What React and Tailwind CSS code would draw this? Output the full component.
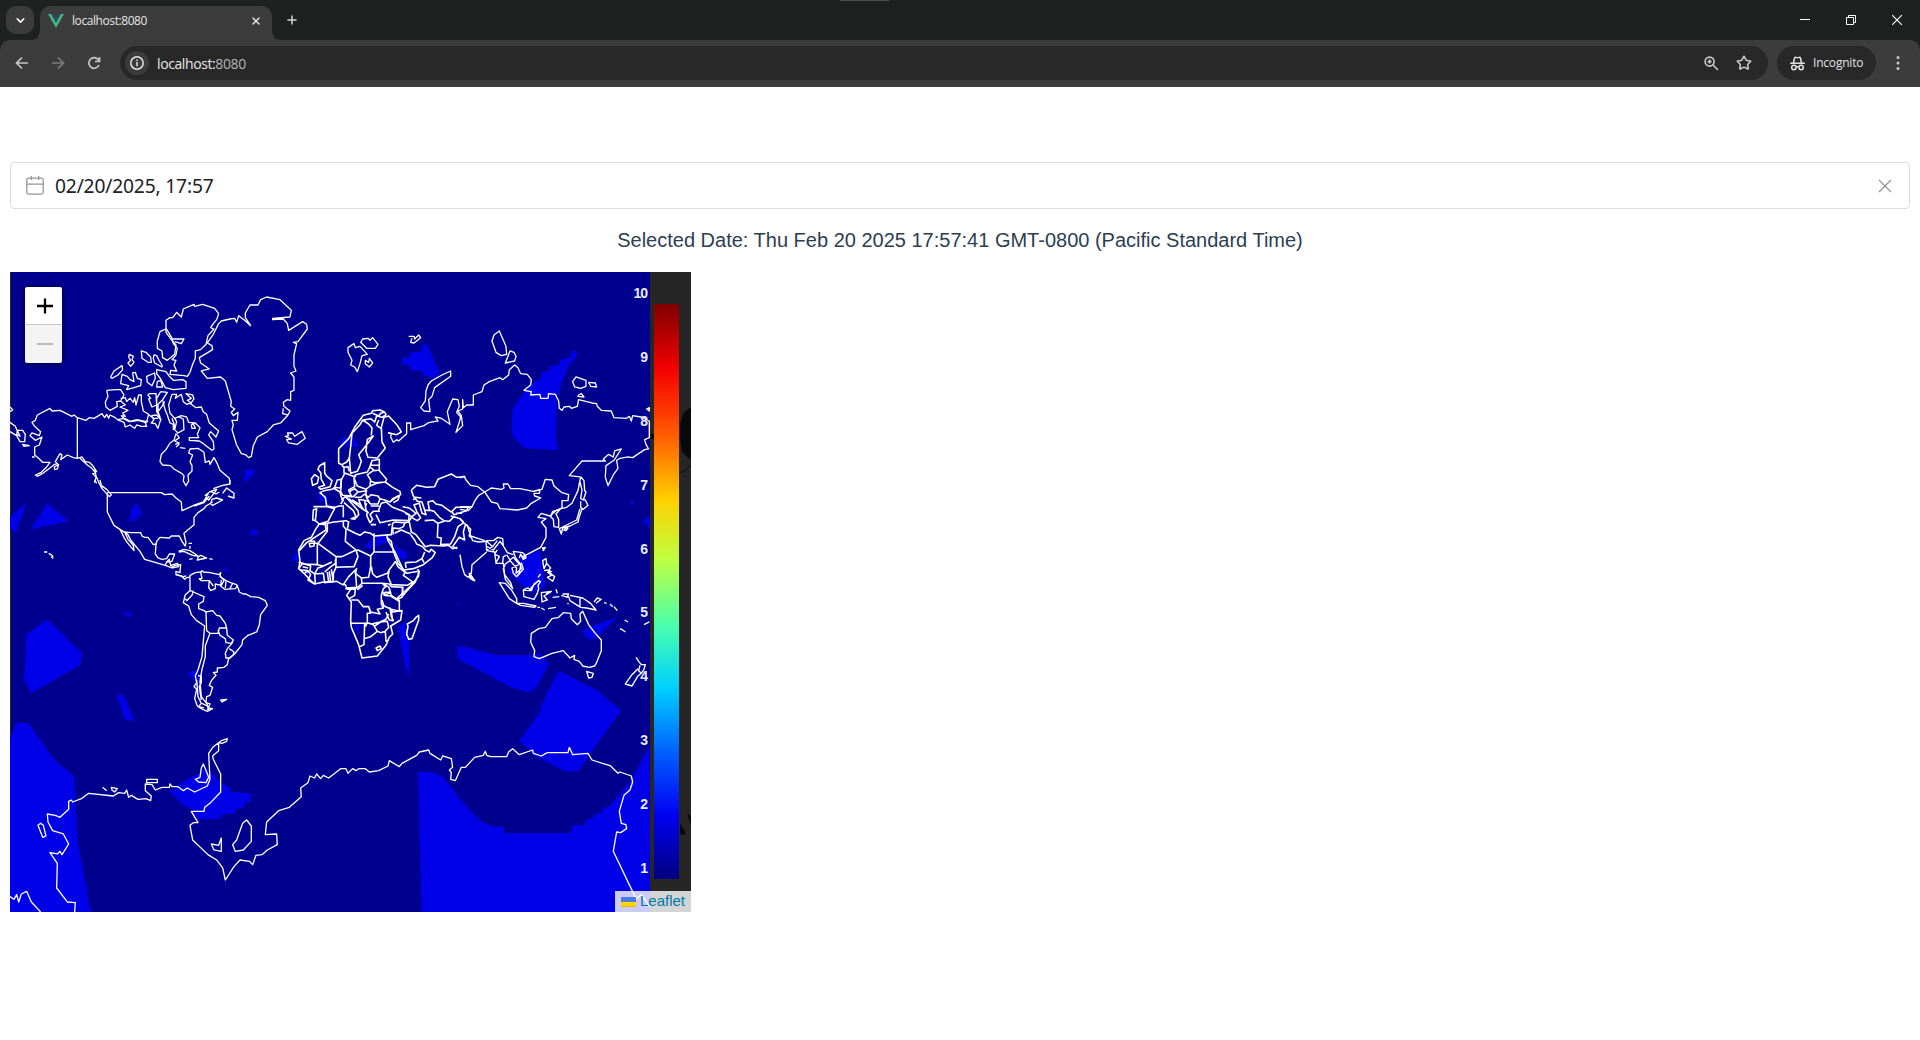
import React from "react";
import { Star, X, Plus, ChevronDown } from "lucide-react";

// Coastlines and borders, grouped by region; coordinates are thirds of a map pixel.
const NORTH_AMERICA = [
  "M30 426L38 434L30 440M30 472L46 484L52 498L50 508L60 514L52 496L68 496L76 508L74 530L60 530L50 512L30 500M68 538L88 542L72 544ZM96 576H104",
  "M232 458L222 450L216 454L180 436L156 438L150 430L112 450L106 466L96 472L104 484L122 500L118 512L96 504L90 512L106 526L126 516L118 540L104 546V570L116 580L128 592H150L140 606L124 622L106 630L112 634L130 624L146 612L164 598L172 596L166 590L180 566L186 570L182 584L202 570L220 578L232 580Z",
  "M163 606L176 598L172 612L164 614Z",
  "M232 458L258 466L268 458L282 460L306 446L314 458L320 448L326 460L330 450L346 458L352 464L372 472L376 486L390 480L404 490L410 480L424 484L440 484L436 474L444 468M352 464L374 460L392 470L416 466L440 474M454 452L470 450L482 464L474 490L466 476L454 474L462 464L454 452M476 452L484 466",
  "M232 580L246 576L256 590L268 592L280 604L290 620L284 612L288 632L298 656L306 668M240 580L262 600L276 610L286 624L278 626L288 636L284 654",
  "M320 376L346 374L362 374L372 390L362 408L350 410L352 424L330 436L318 426L316 412L324 394L320 376M362 400L376 398L380 410L390 400L400 412L404 398L408 420L416 390L424 390L424 410L430 438L446 448L440 470L410 464L388 470L372 462L364 452L376 454L368 444L384 436L360 426L376 420L362 408",
  "M448 386L468 386L470 420L456 426L446 402L452 400L444 390ZM482 380L502 382L488 404L474 418L474 440L480 456L470 440V400L482 380M474 440L486 424L494 410",
  "M332 336L342 318L366 302L368 314L354 330L336 340ZM366 328L382 334L390 344L402 350L398 324L406 322L412 340L424 344L422 362L402 368L380 374L386 362L362 356ZM388 268L400 274L396 284L402 292L392 304L384 294L392 286L386 276Z",
  "M424 258L438 262L452 276L454 292L444 292L426 280ZM462 270L470 272L478 288L486 300V306L464 294L460 280ZM440 334L464 324L466 340L456 362L442 352ZM472 350L482 346L488 366L470 366ZM470 314L498 320L508 334L520 346L548 344L558 350V370L520 374L496 368L482 342L470 326Z",
  "M488 196L498 192V202L514 224L528 240L524 268L502 286L488 278L486 258L472 250V228L480 200Z",
  "M498 166L510 158H518L530 142L544 156L550 132L568 124L582 118L584 124L608 118L644 130L656 146L650 164L640 176L632 188L642 192L624 212L618 238L602 254L586 258V280L578 298L570 322L562 334L552 332L510 328L512 316L530 318L522 300L528 286L516 284L528 270L532 250L520 236L516 220L508 206L498 190ZM516 222L552 222L544 236L524 230",
  "M656 176L664 168L690 162L704 160L710 172L716 152L734 166L752 182L736 158V144L750 120H774L782 104L800 96L840 104L874 136L870 156L818 160V164L850 162L862 176L866 196L908 170L920 178L922 192L894 230L880 232L890 236L882 270V304L888 318L872 324L882 336V376L872 380V406L862 404L850 412L852 424L870 438L864 450L848 446L850 430M864 450L842 474L820 480L802 500L772 516L760 542L754 574L746 578L738 570L724 566L710 540L696 494L700 480L696 466L712 466L714 442L700 452L694 442L704 432L692 424L694 410L676 348L662 336L622 340L604 318L628 312L602 294L598 278L638 254L636 242L622 234L640 208L656 176",
  "M862 504H878L884 514L906 500L916 520L892 538L866 534L860 524L874 522L856 514L866 512Z",
  "M516 388H530L526 400L544 388L550 410L560 418L574 414L562 406L574 400L558 386L578 390L582 402L572 416L588 428L604 426L610 440L620 448L628 474L656 498L648 516L632 500L626 510L640 530L642 552L636 556L610 536L598 528L568 526V518L596 518L592 508L600 488L586 474L566 472L560 456L544 452L524 460L510 444L506 420L516 388M580 476L586 490L576 490L574 480Z",
  "M488 406L496 436L502 450L510 474L520 478V494L524 482L516 460M524 460L530 470L524 494L534 504L552 494L550 462L534 454M528 506L538 518L524 528L538 534L526 538M528 546L538 538M540 548L556 550",
  "M444 448L460 460L474 460M528 506L522 526L510 534L498 554L484 568L480 590L488 600L512 602L522 612L546 626L552 632L550 648L558 662L566 648L564 630L576 618V602L570 590L578 570L566 564L570 552L594 550L612 562L616 592L628 588L630 598L642 578L652 596L660 616L688 640L690 656",
];

const SIBERIA = [
  "M84 248L102 236L106 248L120 244L142 268L126 272L120 296L112 320L104 306L92 300L96 286L84 262ZM122 232L128 222L144 220L150 226L158 218L174 238L166 250L140 250ZM136 286L146 292L148 280L158 294L148 306L136 296Z",
  "M266 214H282L284 222L296 210L302 218L282 234L272 232L276 220M516 228L522 210L538 198L558 244L560 268L544 272L528 262ZM570 258L582 262L588 274L584 288L556 294Z",
  "M392 318V334L344 368L336 394L326 404L330 440L312 438L302 428L316 408L318 378L324 360L334 348L366 330Z",
  "M758 350L768 336L798 346L798 364L782 370L764 366ZM806 352L826 354L830 366L812 364ZM776 390L784 386L792 396L774 394ZM980 432L988 428V438Z",
  "M204 503L214 506L212 516L220 532L230 524L236 528L260 506V474L272 474V494L312 482L324 474L342 470L354 468L346 456L364 460L390 478L382 440L398 402L414 404L418 424L410 442L422 456L416 478L408 502L428 482L424 452L414 438L428 432V404L430 428L440 420L460 420V390L486 380L492 360L508 350L540 338L548 344L566 330L568 314L584 300L594 308L602 326L622 328L634 344L632 360L612 376L634 380L632 390L660 388L662 400L684 400L686 386L706 388L716 408L718 430L726 436L732 426L748 424L754 430L772 424L776 404L816 414L830 416L832 424L844 436L874 438L882 458L920 460L928 454L934 468L938 452L964 456L988 468V518L974 524L978 538L986 552L974 554L938 578L924 576L900 580L890 586L894 610L880 630L864 662L856 636L858 602L882 586L904 552L884 558L880 576L866 568L850 582L856 588H786L748 632L780 636",
];

const AMERICAS = [
  "M322 38V96L342 136L360 148L374 176L382 188L402 212L400 196L384 178L374 156L392 158L416 158H422L426 168L434 172L444 172L460 194L468 192L466 222L474 234L486 238L500 236L508 222H524L516 244L500 246L496 256L468 248L434 238L420 214L392 180L384 164L360 148",
  "M322 38H484L494 44L516 42L528 54L544 66L546 92L560 86L586 74L610 66L624 42L616 46L632 34L650 28L644 38L626 60L618 52M632 34L648 42L658 36M582 78L612 68L628 48M610 66L620 54M690 0V12L668 16L640 26M668 40L680 24L702 40V54L684 48M632 72L638 76L668 60L650 54L636 58L632 72M638 66L618 78L612 86L594 98L582 112V134L552 160L558 188L556 198L546 184L538 168H514L508 174L480 172L470 184L468 194",
  "M284 0L290 10M300 14L306 26L328 50L334 44L320 28L300 14M300 0L304 16",
  "M496 256L512 262L526 256L542 254L540 278L528 274V284L544 288L554 298L562 292L570 292V286L586 278L602 276L606 272L610 276L630 278L658 284L662 278L660 290L678 302L692 308L710 314L716 328L718 336L730 342H738L752 350L776 352L796 362L802 376L782 404L778 434L770 456L744 466L728 480L726 494L704 522L686 536L682 554L672 562L652 564V576L640 578L648 586L634 602L628 616L638 622L630 646L620 650L618 666L626 684L638 686L622 694L604 686L592 678L584 656L590 628L582 620L590 608L586 588L594 570L606 530L614 438L590 422L574 404L566 378L550 368L556 344L570 332V294",
  "M500 246L508 238L512 256L532 250L536 260L514 264M528 284L550 290L558 288M536 214L552 208L570 212L594 228L578 226L552 214L536 216M594 232L602 226L620 234L592 240ZM568 238L578 236M628 236L638 238M566 190H576M570 198V206M132 216L142 216M146 220L156 226V234M158 228V236",
  "M602 276L606 296L598 296L604 302L628 302L626 322L632 332L646 326V312L664 316L672 302L662 290M664 300L662 318L674 328L706 326L714 316M678 304L676 324M698 310L690 326M628 302L640 318M570 332L580 334L576 346L560 362L556 356M580 336L612 350L610 364L596 372V386L612 392L618 396L638 392L650 406L660 408L676 430L680 444L658 444L654 460L630 460L620 452L618 396M654 450L660 466L676 476L678 488L694 490L700 480L682 466L680 444M630 460L616 498V530L606 568L600 604L604 650L618 668L630 672L622 690M700 480L696 490L682 506L676 520L678 534H690L700 524L702 516L688 506M594 586L604 590V608L598 620L604 660M590 600L594 650L604 670L596 680L612 684M606 670L622 678L628 692M662 660L680 658L666 666Z",
];

const EUROPE_AFRICA = [
  "M314 36L300 30L278 32L274 40L250 46L224 82L206 116L176 146V190L186 194L200 186L208 174L212 220L232 214L240 196L244 184L236 164L262 132L280 108L262 118L258 154L264 172L292 174L316 144L306 126L304 82L312 52L326 48L352 76L364 96L350 104L324 98",
  "M208 174L212 140L216 100L240 74L248 60L266 72L276 84L274 106M250 60L272 56L284 66L290 48L306 52M278 40L296 48L302 40L314 36M296 60L290 76L304 86M314 36L318 44L306 52",
  "M118 198L134 188V220L142 230L156 242L150 260L122 268L116 262L134 256L124 238L122 218L114 208ZM94 236L104 224L116 232L112 250L98 256Z",
  "M186 196L192 202V218L212 226L224 230L226 224L262 216L268 204L276 182L298 178V210L284 212L268 200M276 182L272 196L296 196M280 212L262 224L272 240L270 258L258 268L232 258L222 234L228 226M222 234L224 260L206 270L214 288L188 286L182 274L184 240L194 220M298 212L320 238L316 246L286 248L272 244M192 202L204 200L208 214M270 258L290 250L316 246L338 262L360 274L362 284L338 296L330 306L314 300L300 296L294 288L274 284L264 292L258 286L258 268",
  "M164 262L172 240L184 238L182 264L164 262L156 268L132 272L120 278L136 292L140 318L164 322L178 318L192 318M160 264L180 276L184 292L190 300L182 312M206 276L224 266L234 276L220 290L200 290M234 276L262 272M224 292L242 292L254 282L264 292M234 298L262 302L272 312L294 312L300 296M258 290L270 310M272 318H298M254 302L258 330L266 340M184 300L196 290L206 300L234 332L236 344L224 358L214 356L228 350L220 332L192 308M206 296L246 326L262 336L260 346L270 368L278 358L270 344L280 334L298 334M216 300L240 314L252 330M236 300L246 322M260 310L256 322",
  "M100 320H142L164 326L156 340L144 364L118 372L106 362L110 326L100 330L98 360L106 362M190 320V352M272 374H288M324 376L332 372M288 344L300 368L340 360L386 362L388 344L370 334L338 322L318 306L304 310L296 330L298 336M332 304L352 290L358 288L354 300L340 308",
  "M118 372L142 370L162 366L198 362L206 366L202 388L226 400L240 406L254 396L272 400L282 408L334 404L338 370L344 366L370 368L388 366L394 396L408 404L436 440L452 436L490 438L506 436L518 446L532 442M568 520L584 542L572 536Z",
  "M118 372L108 386L94 412L72 422L56 450L60 484L56 506L72 520L92 542L104 552L130 546H158L170 544L188 554L196 554L200 564L212 568L200 586L214 606L212 662L214 682L236 734L246 774L292 768L318 736L328 712L338 702L332 678L362 660L366 632L358 634V602L352 594L390 560L416 528V514L380 520L354 490L340 454L334 424L320 412",
  "M118 372L136 374L138 390L86 424L80 428L58 452M142 370V394L114 430M112 430V494L72 492L56 486M90 424H104L102 438L90 440L88 430L114 430L168 470L186 470L228 450L196 424L198 388L190 378V364M228 450H234L272 468L282 456H340M282 400V456M228 450L234 470L222 500L168 502L166 478M168 470V500M272 468V500L266 532L244 534L226 520L230 504M274 500L278 522L290 532L322 520L330 506L338 496L346 484M346 484L354 500L376 518L370 526L398 546L382 556L334 554L324 530L328 508",
  "M168 502L160 520V544L134 548L130 520L104 522L106 552M134 516L150 502L166 490M148 514L152 546M142 516L146 546M104 552L84 540L92 524L84 512L62 510M56 506L68 490L92 498L90 512L104 522M112 494L130 498L156 486M104 522L114 504L132 498M74 518L86 514M68 500L84 504M160 544L154 508M190 554L206 530L226 510L230 562L198 564",
  "M196 566H226L234 562L246 550H306L320 558L310 566L304 586V612L310 624L292 628L300 642L272 636L266 620H250L234 600H214M200 568L226 568L224 586L208 596M232 570L248 556M244 534L246 550M306 550L328 552L334 560L368 562L366 592L352 598L334 586L330 576L310 578M310 556L326 560L332 578L318 584L304 578M310 586L332 588L358 604M306 600L312 618L334 628L358 634M366 632L338 636L330 624L334 650L340 662L328 660L318 636M212 670H254L268 670L274 672L300 666L318 658L326 642M266 620L272 640H262V668M254 670L252 734L240 740M256 680L262 668L280 674L292 694L272 710L252 716M292 694L302 698L316 694L326 682L322 664L302 666L284 678M316 694L318 724L324 722M334 636L338 660M288 744L300 738L304 746L292 752Z",
  "M320 404L324 422L344 454L356 480L370 510L400 506L430 494L456 474L466 458L454 448L448 456L436 450L428 440L410 432L404 420L392 404M340 404L338 384L358 386L370 380L376 366M344 400L364 390L392 402M376 488L378 504M376 488L408 486L426 476L432 488M426 476L434 456M412 508L418 514L406 546L376 578L368 588V560M408 652L416 646V660L396 716L386 718L380 702L384 680L382 672L400 662Z",
  "M394 270L410 256L440 262L464 260L474 238L514 222L530 232L556 230M394 270L400 288L412 304L426 306L434 330L438 344L426 340L418 310L402 314L410 334L422 354L412 362L394 352M368 320L388 324L408 340L396 350L376 340M400 300L406 292L424 294M448 330L444 306L458 302L468 312L486 316L502 328L514 336L528 322L564 322L572 320M448 330L462 334L478 352L492 362L508 364L522 350L540 356L552 368M434 362L460 360L474 370L492 364M474 370L472 412L484 414L482 434L512 432L524 410L534 380L552 368M516 336L522 344L540 338L560 332L564 324M528 340L546 340M534 354L512 348M394 352L386 366M434 330L450 332M556 376L550 396L554 420L538 412L518 440L532 446M556 372L572 388L568 408L574 412",
];

const EAST_ASIA_OCEANIA = [
  "M0 114L12 108L18 120L32 136L54 140L74 156L94 144L124 148L132 144L130 132L144 132L152 146L180 146L220 154L240 148L238 160L222 160L224 168L242 174L214 190L200 204L172 210L120 206L112 190L94 186L74 156L56 166L46 180L36 200H0M222 154L246 148L256 118L276 120L282 138L306 158L326 164L324 182L306 182L306 204L288 212L270 228L244 220L234 232L258 236L244 246L258 264V292L242 322L196 346L190 356L182 342L178 354",
  "M362 110L354 152L336 190L320 202L302 206L288 222L296 238L296 262L282 260L280 238L272 230L278 214L300 208M362 110L372 122L374 152L378 156L370 180L362 176L366 150L360 126M366 178L376 180L384 196L370 208L362 202L362 184M366 206L358 230L354 246L330 258L308 264L304 282L298 266L314 258L350 240L360 206M312 268L324 264L318 272L310 270",
  "M0 236L12 250L22 256L30 282L38 302L56 306L78 304L80 332L104 336L108 370L130 370L134 404L152 428L158 446L136 418L130 386L136 372L150 362L170 384L168 400L184 386L180 370L166 352L160 334L188 338L196 346M0 208L24 212L36 200M0 344L6 380L14 404L24 412L34 400L36 374L80 336M30 402L42 422L30 414ZM32 288L56 296L74 302M78 302L100 302L114 292L128 296L130 318L142 338L160 344M130 318L120 304L100 330L78 318M80 304L98 320L80 330M98 320L112 302M112 330L104 342L118 350L108 368M138 346L130 350L128 370M140 344L150 360L160 352L172 366L182 376L178 398L170 410L160 400L156 384L176 374M184 368L190 388L172 408M248 324L256 322L250 332ZM186 350L196 346L198 354L190 358Z",
  "M118 428L136 430L156 452L170 476L170 490L148 476ZM170 490L190 490L228 498L224 502L182 496ZM232 502H240M244 504L254 510M264 506L288 502M190 450L210 452L216 440L234 424L242 424L234 436L236 446L232 460L222 478L192 470ZM190 450L204 444L214 452L222 432L238 420M234 412L242 402M248 362L258 356L260 370L252 386ZM260 370L272 384L266 390L276 396M252 392L262 390L276 404L284 410L278 424L262 412L274 406L262 396M244 458L274 454L262 462L252 468L262 480L246 486ZM266 458L258 462M288 448L292 460M278 472L298 470M308 462L326 462L320 474M322 490L326 492M304 466L316 470L326 470L330 482L362 502L380 504L408 510L392 490L368 474L330 466M360 470V502M402 486L412 474L424 478L408 490M432 488L440 490M450 492L458 500M462 500L472 512M494 540L504 546M480 566L488 570L496 576M552 554L568 546",
  "M214 580L236 566L256 562L276 536L296 532L310 518L332 520L334 536L352 554L362 544L360 522L368 514L386 554L404 578L424 600V632L408 672L404 678L388 682L368 678L358 664L342 658L344 646L330 654L310 632L276 640L238 656L222 650L224 632L212 606ZM380 694L400 700L396 712L386 714ZM528 652L536 664L544 674L556 674L552 688L544 700L536 692L540 676M534 686L516 704L496 732L516 738L534 708L544 700",
];

const ANTARCTICA_WEST = [
  "M30 590L42 598L50 584L56 606L64 582L80 574L94 606L122 636M224 636L226 608L202 606L170 564L172 490L150 458L172 462L180 454L186 464L206 432L190 402L158 392L144 366L142 342L166 346L180 352L206 328V304L214 300L218 306L244 296L266 280L340 288L356 278L374 280L380 270L386 292L394 286L414 298L438 296L452 302L454 288L436 272V252L456 254L466 270L486 262L508 262L510 252L516 260L534 260L550 272L562 264L584 276L622 258L630 238L626 160L640 140L664 122L682 116L680 124L666 130L656 128V152L638 168L640 178L662 222V276L630 310L614 322L612 334H574L594 368L580 368L570 376L578 420L624 464L650 480L668 504L676 540L702 500L720 480L748 484L758 494L768 466L786 464L802 450L832 434L830 402L796 404L800 366L836 332L868 322L904 290L902 264L924 248L930 228L944 234L950 222L962 236L970 226L986 234L1022 206",
  "M114 376L122 370L130 376L138 408L128 412ZM440 238H472V248H440ZM308 262L320 272M334 262L352 266L344 276L336 270ZM586 238L600 232L604 204L610 192L620 216L626 232L618 248L596 246ZM634 432L656 436L664 414V454L642 450ZM698 434L710 420L728 370L740 360L754 378V424L730 450L706 454Z",
];

const ANTARCTICA_EAST = [
  "M0 206L18 206L24 220L38 206L48 212L56 206H76L88 216L116 212L144 198L148 182L178 200L186 190L230 166L238 156L266 150L270 160L302 180L308 168L334 176L338 202L328 210L334 218L332 238L346 242L364 202H376L404 172L430 166L436 154L440 166L452 170H500L506 156L518 146L538 164L578 150L580 160L604 168L622 158H684L688 142L698 164L744 160L756 180L812 198L834 220L840 216L874 228L878 246L870 270L852 286L838 334L844 370L858 374L860 386L842 398L830 396L820 454L888 596L904 584L930 620",
];

// Areas of raised activity on the heat layer.
const HEAT = [
  { t: "translate(0 265) scale(.3333)", d: "M738 614L764 612L762 626L746 644L730 650Z" },
  { t: "translate(320 265) scale(.3333)", d: "M246 280L268 276L272 262L304 260L306 240L322 238L342 288L360 322L350 338L328 336L308 330V318L270 314L266 300L246 298ZM610 384L640 354L664 336V320L688 318L692 302L718 300L720 284L750 278L756 258H770V274L744 304L716 380L710 410L708 510L714 556L614 550L574 510L578 430ZM62 524L76 514L104 524L118 548L62 540ZM930 708L940 710L938 720Z" },
  { t: "translate(0 480) scale(.3333)", d: "M30 110L80 68L48 158L30 148ZM142 70L206 124L92 148ZM412 70L426 102L402 124L388 122L394 88ZM504 104L510 108L504 112ZM748 158L764 148L776 158L758 168ZM672 266L682 262V274L672 276ZM894 208L900 242L874 242ZM368 396L390 396L396 406L386 412ZM80 462L142 418L246 520L242 554L94 640L72 600ZM562 578L590 570L604 590L598 644L590 638L588 604ZM350 646L372 645L378 670L402 720H376ZM954 40L966 44L982 72L960 64Z" },
  { t: "translate(280 400) scale(.3333)", d: "M254 438L286 408L328 408V422L270 448ZM112 280L140 286L148 316L122 304ZM342 430L350 440L384 460L374 480L350 470ZM230 672L240 672L236 698L226 690ZM354 680L376 666L388 710V830L376 800L362 730ZM532 738L600 758V796L560 770ZM532 606L540 612L534 614Z" },
  { t: "translate(460 440) scale(.3333)", d: "M180 350L240 332L256 440L238 450L220 456L190 440L140 390L180 388ZM-8 616L110 646L200 646L240 640L266 674L230 742L206 758L150 740L-8 656ZM296 692L410 750L480 810H238L266 750ZM368 574L384 562L470 532L424 580L396 600L378 594ZM510 178L518 184V204ZM548 244L570 228V266Z" },
  { t: "translate(0 700) scale(.3333)", d: "M30 110L48 68H84L166 182L222 228L234 430L268 610L274 636H30ZM356 0L376 60L404 62L378 0ZM506 272L530 266L552 242L590 224L620 204L664 248L688 262L692 276L752 280V306L732 308V324L708 326L704 340L664 344L660 358H592L578 330L546 312Z" },
  { t: "translate(340 700) scale(.3333)", d: "M616 0H802L844 30L714 214L674 214L586 168L538 122L604 30ZM234 216H278L310 232L370 310L400 340L420 360L450 378L490 380L494 400H690L696 378L734 374L738 358L760 356L764 342L786 338L788 324L806 320L872 244L930 134V636H244Z" },
];

const REGIONS = [
  ["translate(0 265) scale(.3333)", NORTH_AMERICA, 3.9],
  ["translate(320 265) scale(.3333)", SIBERIA, 3.9],
  ["translate(0 480) scale(.3333)", AMERICAS, 4],
  ["translate(280 400) scale(.3333)", EUROPE_AFRICA, 4.7],
  ["translate(460 440) scale(.3333)", EAST_ASIA_OCEANIA, 4.1],
  ["translate(0 700) scale(.3333)", ANTARCTICA_WEST, 3.9],
  ["translate(340 700) scale(.3333)", ANTARCTICA_EAST, 3.9],
];

function WorldMap() {
  return (
    <svg className="block h-[640px] w-[681px]" viewBox="10 272 681 640">
      <rect x="10" y="272" width="681" height="640" fill="#262626" />
      <g fill="#090909">
        <path d="M691 407L684 412L680 424V440L682 452L691 460Z" />
        <path d="M651 434H654V439H651Z" />
        <path d="M680 823L685 831V835L680 834ZM687 813L691 816V826Z" />
      </g>
      <path d="M691 464Q687 471 679 473" fill="none" stroke="#0e0e0e" />
      <rect x="11" y="272" width="639" height="640" fill="#00008f" />
      {HEAT.map((h) => (
        <path key={h.t} d={h.d} transform={h.t} fill="#0000e8" />
      ))}
      <g fill="none" stroke="#fff" strokeLinejoin="round">
        {REGIONS.map(([t, paths, width]) => (
          <g key={t} transform={t} strokeWidth={width}>
            {paths.map((d, i) => (
              <path key={i} d={d} />
            ))}
          </g>
        ))}
      </g>
    </svg>
  );
}

function ColorScale() {
  return (
    <div className="pointer-events-none absolute top-[13px] right-[12px] flex gap-[7px]">
      <div className="flex flex-col text-right font-['Liberation_Sans',Arial,sans-serif] text-[14px] font-bold tracking-[-1px] text-[#e9edff]">
        {[10, 9, 8, 7, 6, 5, 4, 3, 2, 1].map((n) => (
          <span key={n} className="h-[63.9px] leading-4">{n}</span>
        ))}
      </div>
      <div className="mt-[19px] h-[575px] w-[25px] bg-[linear-gradient(to_bottom,#800000_0%,#f10000_11.1%,#ff3b00_19%,#ff6c00_24.5%,#ffd000_34%,#beff40_44.4%,#49ffad_56%,#00d0ff_66.7%,#0060ff_78%,#0000f1_89%,#000080_100%)]" />
    </div>
  );
}

function LeafletMap() {
  return (
    <div className="relative h-[640px] w-[681px] overflow-hidden">
      <WorldMap />
      <ColorScale />
      <div className="absolute top-[15px] left-[15px] flex w-[37px] flex-col overflow-hidden rounded-[2px] shadow-[0_1px_5px_rgba(0,0,0,0.65)]">
        <button className="flex h-[38px] items-center justify-center border-b border-[#ccc] bg-white pl-[2px] text-black">
          <svg className="h-4 w-4" viewBox="0 0 16 16" fill="none" stroke="currentColor" strokeWidth="2.3"><path d="M0 8h16M8 0.5v15" /></svg>
        </button>
        <button className="flex h-[38px] items-center justify-center bg-[#f4f4f4] pl-[2px] text-[#bbb]">
          <svg className="h-4 w-4" viewBox="0 0 16 16" fill="none" stroke="currentColor" strokeWidth="2"><path d="M0 8h16" /></svg>
        </button>
      </div>
      <div className="absolute right-0 bottom-0 flex h-[21px] w-[76px] items-center bg-white/80 pl-[6px] font-['Liberation_Sans',Arial,sans-serif] text-[15px] text-[#0078a8]">
        <svg className="mr-1 h-[10px] w-[15px]" viewBox="0 0 15 10"><path fill="#4c7be1" d="M0 0h15v5H0z" /><path fill="#ffd500" d="M0 5h15v5H0z" /><path fill="#e0bc00" d="M0 9h15v1H0z" /></svg>
        <span>Leaflet</span>
      </div>
    </div>
  );
}

function TabBar() {
  return (
    <div className="flex h-10 bg-[#1f2120]">
      <div className="flex w-10 pt-[6px] pl-[6px]">
        <div className="flex h-7 w-7 items-center justify-center rounded-[10px] bg-[#3c3c3c] text-white"><ChevronDown size={13} strokeWidth={2.8} /></div>
      </div>
      <div className="relative mt-[6px] flex h-[34px] w-[232px] items-center rounded-t-[10px] bg-[#3c3c3c] pb-[5px] pl-2">
        <svg className="h-4 w-4" viewBox="0 0 16 16"><path fill="#41b883" d="M0 1h3.2L8 9.4 12.8 1H16L8 15z" /><path fill="#35495e" d="M3.2 1h2.9L8 4.4 9.9 1h2.9L8 9.4z" /></svg>
        <span className="ml-2 text-[12px] tracking-[-0.42px] text-[#e3e3e3]">localhost:8080</span>
        <X className="mr-[10px] ml-auto text-[#e3e3e3]" size={12} strokeWidth={3} />
        <svg className="absolute bottom-0 -left-[10px] h-[10px] w-[252px]" viewBox="0 0 252 10"><path fill="#3c3c3c" d="M10 0Q10 10 0 10H10ZM242 0Q242 10 252 10H242Z" /></svg>
      </div>
      <Plus className="mt-[13px] ml-[13px] text-[#d0d0d0]" size={14} strokeWidth={2.6} />
      <div className="ml-[541px] h-px w-[49px] bg-[#4d4d4d]" />
      <div className="ml-auto flex gap-[36px] pt-[15px] pr-[18px] text-white">
        <svg className="h-[10px] w-[10px]" viewBox="0 0 10 10"><path d="M0 4.5h10" stroke="currentColor" /></svg>
        <svg className="h-[10px] w-[10px]" viewBox="0 0 10 10" fill="none" stroke="currentColor"><path d="M.5 2.5h7v7h-7zM2.5 2V.5h7v7H8" /></svg>
        <svg className="h-[10px] w-[10px]" viewBox="0 0 10 10" stroke="currentColor" strokeWidth="1.1"><path d="M0 0l10 10M10 0L0 10" /></svg>
      </div>
    </div>
  );
}

function Toolbar() {
  return (
    <div className="bg-[#1f2120]">
      <div className="flex h-[47px] items-center rounded-t-[10px] bg-[#3c3c3c] pr-[20px] pb-px pl-[14px] text-[#c7c7c7]">
        <svg className="h-4 w-4" viewBox="0 0 16 16" fill="none" stroke="currentColor" strokeWidth="1.7"><path d="M14 8H3M8 2.5L2.5 8 8 13.5" /></svg>
        <svg className="ml-[20px] h-4 w-4 text-[#7d7d7d]" viewBox="0 0 16 16" fill="none" stroke="currentColor" strokeWidth="1.7"><path d="M2 8h11M8 2.5L13.5 8 8 13.5" /></svg>
        <svg className="ml-[20px] h-4 w-4" viewBox="0 0 16 16" fill="none" stroke="currentColor" strokeWidth="1.7"><path d="M13 10A5.3 5.3 0 1 1 12.2 4.6L13.4 6M13.5 2v4.5H9" /></svg>
        <div className="ml-[18px] flex h-[34px] flex-1 items-center rounded-full bg-[#282828] pr-[16px] pl-[5px]">
          <div className="flex h-6 w-6 items-center justify-center rounded-full bg-[#3c3c3c] text-[#e3e3e3]">
            <svg className="h-[14px] w-[14px]" viewBox="0 0 14 14" fill="none" stroke="currentColor" strokeWidth="1.5"><circle cx="7" cy="7" r="6.2" /><path d="M7 6v4.2M7 3.6v1.5" /></svg>
          </div>
          <span className="ml-2 text-[14px] tracking-[-0.4px] text-[#e8e8e8]">localhost:<span className="text-[#b4b4b4]">8080</span></span>
          <svg className="ml-auto h-[15px] w-[15px]" viewBox="0 0 15 15" fill="none" stroke="currentColor" strokeWidth="1.6"><circle cx="5.6" cy="5.6" r="4.5" /><path d="M9 9l5 5M3.6 5.6h4M5.6 3.6v4" /></svg>
          <Star className="ml-[17px]" size={16} strokeWidth={2.4} />
        </div>
        <div className="ml-[9px] flex h-[34px] w-[99px] items-center rounded-full bg-[#282828] pl-[13px] text-[#e3e3e3]">
          <svg className="h-[15px] w-[15px]" viewBox="0 0 15 15" fill="none" stroke="currentColor" strokeWidth="1.5"><path d="M.2 7.2h14.6M3.4 7L4.6 1.8Q5 1 6 1.4 7.5 2 9 1.4 10 1 10.4 1.8L11.6 7M6 11.2Q7.5 10.4 9 11.2" /><circle cx="3.9" cy="11.5" r="2.2" /><circle cx="11.1" cy="11.5" r="2.2" /></svg>
          <span className="ml-[8px] text-[12px] tracking-[-0.2px]">Incognito</span>
        </div>
        <svg className="ml-[20px] h-4 w-[4px]" viewBox="0 0 4 16" fill="currentColor"><circle cx="2" cy="2.5" r="1.5" /><circle cx="2" cy="8" r="1.5" /><circle cx="2" cy="13.5" r="1.5" /></svg>
      </div>
    </div>
  );
}

export default function App() {
  return (
    <div className="flex h-[1040px] w-full flex-col overflow-hidden bg-white font-['Open_Sans','Noto_Sans',sans-serif]">
      <TabBar />
      <Toolbar />
      <main className="flex flex-col px-[10px] pt-[75px]">
        <div className="flex h-[47px] items-center rounded border border-[#ddd] pr-[17px] pl-[15px] text-[#212121]">
          <svg className="h-[19px] w-[18px] text-[#959595]" viewBox="0 0 18 19" fill="none" stroke="currentColor" strokeWidth="1.25"><rect x=".8" y="2" width="16.4" height="16" rx="1.8" /><path d="M1 8h16M5.3 0v4M12.7 0v4" /></svg>
          <span className="ml-[11px] pt-[2px] font-['Noto_Sans',sans-serif] text-[19.2px] tracking-[-0.16px]">02/20/2025, 17:57</span>
          <svg className="ml-auto h-[14px] w-[14px] text-[#959595]" viewBox="0 0 14 14" stroke="currentColor" strokeWidth="1.3"><path d="M1 1l12 12M13 1L1 13" /></svg>
        </div>
        <p className="mt-[19px] mb-[20px] text-center font-['Liberation_Sans',Arial,sans-serif] text-[20px] leading-[24px] text-[#2c3e50]">Selected Date: Thu Feb 20 2025 17:57:41 GMT-0800 (Pacific Standard Time)</p>
        <LeafletMap />
      </main>
    </div>
  );
}
